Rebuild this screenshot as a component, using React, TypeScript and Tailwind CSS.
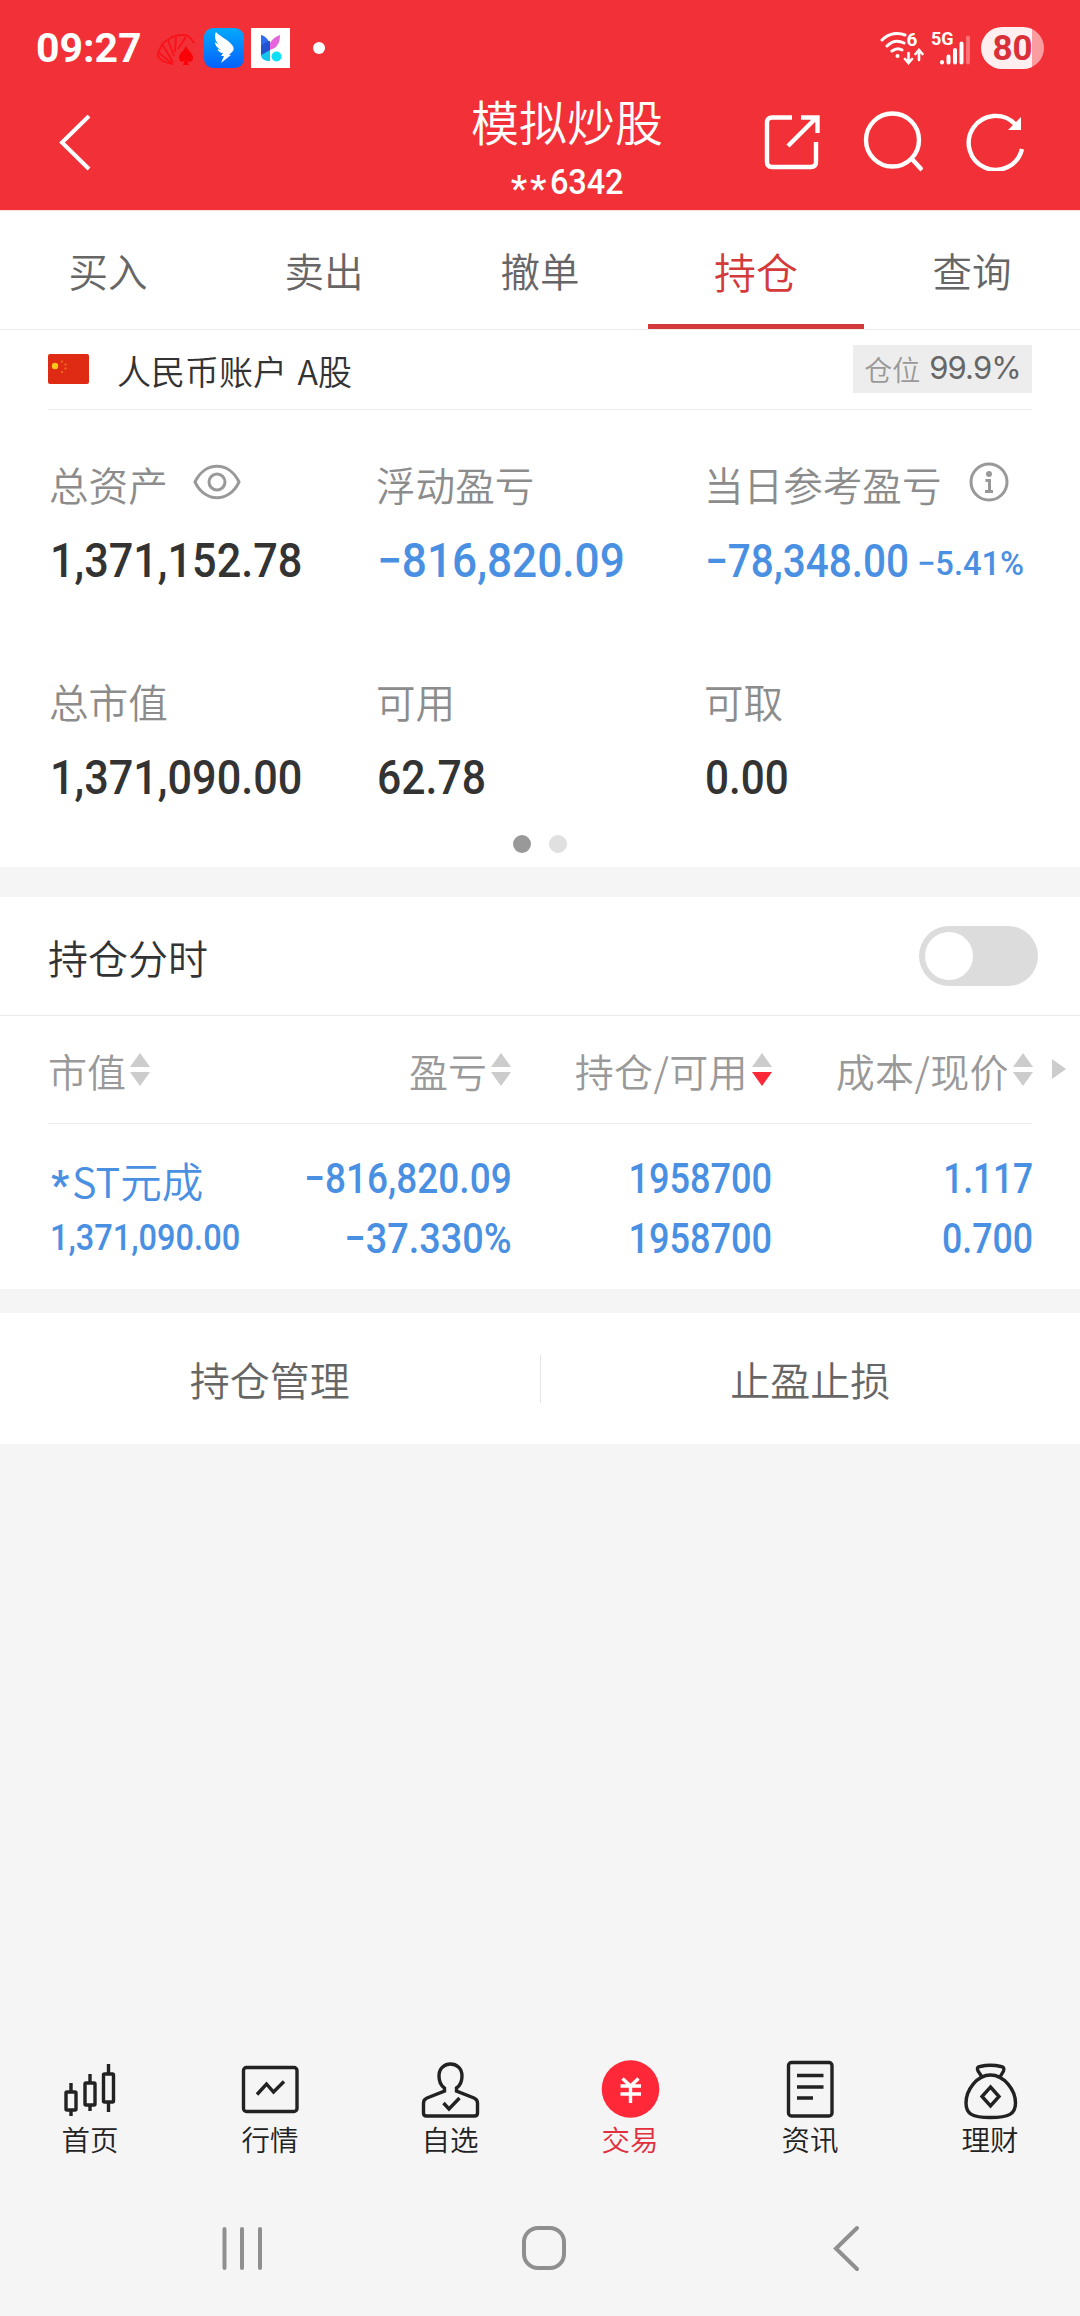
import type { ReactNode } from "react";
import clsx from "clsx";

const TABS = ["买入", "卖出", "撤单", "持仓", "查询"];
const ACTIVE_TAB = "持仓";

const NUM = "inline-block whitespace-nowrap font-medium font-['Roboto',sans-serif]";

function Triangle({ d, className }: { d: string; className: string }) {
  return (
    <svg viewBox="0 0 20 14" className={clsx("w-5 h-3.5", className)} fill="currentColor">
      <path d={d} />
    </svg>
  );
}

function SortIcon({ desc = false }: { desc?: boolean }) {
  return (
    <span className="flex flex-col gap-[5px] ml-[4px] -mt-[3px]">
      <Triangle d="M10 0L20 14H0z" className="text-[#ccc]" />
      <Triangle d="M0 0H20L10 14z" className={desc ? "text-[#fe2838]" : "text-[#ccc]"} />
    </span>
  );
}

/* ─── Status bar ─── */
function StatusBar() {
  return (
    <div className="h-24 flex items-center pl-[36px] pr-[36px] text-white">
      <span className="w-[121px] text-[41px] leading-none font-bold font-['Roboto',sans-serif]">09:27</span>
      <svg viewBox="0 0 38 32" className="w-[38px] h-8 mt-1" fill="none" stroke="#f8121a" strokeWidth="1.800">
        <path d="M16 30C9 29 3 27 1 22C0 20 2 17 3 15C4 10 8 7 12 5C17 1 26 0 31 2C34 4 36 7 37 9" />
        <path d="M16 30L2 19M16 28L5 10M17 22L11 6M18 18L19 3M21 15L29 3" />
        <path d="M29 12C27 17 22 19 22 24C22 28 26 29 28 26L26 31H32L30 26C32 29 36 28 36 24C36 19 31 17 29 12Z" fill="#fb0208" stroke="none" />
      </svg>
      <svg viewBox="0 0 40 40" className="w-10 h-10 ml-[9px]">
        <defs>
          <linearGradient id="wing" x1="0" y1="0" x2="0" y2="1">
            <stop offset="0" stopColor="#03a9fd" />
            <stop offset="1" stopColor="#0561fb" />
          </linearGradient>
        </defs>
        <rect width="40" height="40" rx="9" fill="url(#wing)" />
        <path d="M12 4C15 8 25 12 28 17C30 19 30 21 29 23L25 27H27L17 35L20 28H17L19 25C16 25 14 23 13.500 21L17 22C13 20 11 17 11 14L15 17C11 13 10 8 12 4Z" fill="#fff" />
      </svg>
      <svg viewBox="0 0 39 40" className="w-[39px] h-10 ml-[7px]">
        <rect width="39" height="40" fill="#fff" />
        <path d="M10 7C15 8 19 13 19 19V33C14 32 10 29 10 23Z" fill="#2d6ef0" />
        <path d="M10 27L19 22V33C14 33 10 31 10 27Z" fill="#15c5ee" />
        <path d="M19 15C22 10 26 8 29 7C29 15 26 20 19 22Z" fill="#e565dd" />
        <path d="M10 18C13 15 16 13 19 13V22L10 27Z" fill="#2352d0" />
        <circle cx="25.500" cy="28.500" r="5" fill="#0fdff5" />
      </svg>
      <span className="w-3 h-3 rounded-full bg-white ml-[23px]" />

      <svg viewBox="0 0 44 36" className="w-11 h-9 ml-auto" fill="none" stroke="#fff" strokeWidth="3" strokeLinecap="round">
        <path d="M2 10C9 3 18 2 25 5M7 16C12 11 18 10 24 13M12 21C16 18 19 18 22 20" />
        <circle cx="17.500" cy="26" r="2" fill="#fff" stroke="none" />
        <path d="M28.500 23V32M25 29L28.500 33L32 29M39 30V21M35.500 24L39 20L42.500 24" strokeWidth="2.600" />
        <text x="26.500" y="16" fill="#fff" stroke="none" className="text-[19px] font-bold font-['Roboto',sans-serif]">6</text>
      </svg>
      <svg viewBox="0 0 40 36" className="w-10 h-9 ml-[7px]" fill="none" stroke="#fff" strokeWidth="4" strokeLinecap="round">
        <text x="0" y="15" fill="#fff" stroke="none" className="text-[18px] font-bold font-['Roboto',sans-serif]">5G</text>
        <path d="M11 32V32.500M17.500 26.500V32.500M24 20V32.500M30.500 13.500V32.500" />
        <path d="M37 7.500V32.500" stroke="#ff7175" />
      </svg>
      <span className="w-[63px] h-[42px] ml-[10px] rounded-full overflow-hidden bg-[linear-gradient(90deg,#ffeff0_51px,#fa9da1_51px)] flex items-center justify-center">
        <span className="text-[35px] leading-none font-bold text-[#d9303a] font-['Roboto',sans-serif]">80</span>
      </span>
    </div>
  );
}

/* ─── Title bar ─── */
function TitleBar() {
  return (
    <div className="h-[114px] grid grid-cols-3 items-start text-white">
      <svg viewBox="0 0 32 56" className="w-8 h-14 ml-[59px] mt-[19px]" fill="none" stroke="currentColor" strokeWidth="4">
        <path d="M30 1L3 27.500L30 54" />
      </svg>
      <div className="text-center translate-x-[27px] -mt-1">
        <h1 className="text-[48px] leading-[56px]">模拟炒股</h1>
        <p className="flex items-center justify-center h-[68px] pl-0.5 text-[35px] leading-none">
          <span className={clsx(NUM, "font-bold text-[37px] tracking-[3px] pt-3")}>**</span>
          <span className={clsx(NUM, "origin-left scale-x-93 tracking-[-0.2px] -mr-[3px]")}>6342</span>
        </p>
      </div>
      <div className="flex items-center mt-[14px] ml-[44px] gap-[43px]">
        <svg viewBox="0 0 56 58" className="w-14 h-[58px]" fill="none" stroke="currentColor" strokeWidth="4.400">
          <path d="M28 5.500H8Q3 5.500 3 10.500V50Q3 55 8 55H47Q52 55 52 50V30" />
          <path d="M37 5.500H53.500V21M52 6L24 34" />
        </svg>
        <svg viewBox="0 0 60 62" className="w-15 h-[62px]" fill="none" stroke="currentColor" strokeWidth="4.400">
          <circle cx="29.500" cy="30" r="26.500" />
          <path d="M48 48L59 60" />
        </svg>
        <svg viewBox="0 0 58 60" className="w-[58px] h-15" fill="none" stroke="currentColor" strokeWidth="4.400">
          <path d="M56 38A27 27 0 1 1 49 13" />
          <path d="M55 6V19H42z" fill="currentColor" stroke="none" />
        </svg>
      </div>
    </div>
  );
}

interface StatProps {
  label: string;
  icon?: ReactNode;
  children: ReactNode;
}

function Stat({ label, icon, children }: StatProps) {
  return (
    <div>
      <div className="h-[60px] -ml-px -mt-[2px] mb-[2px] flex items-center text-[39.600px] text-[#8c8c8c] whitespace-nowrap">
        {label}
        {icon}
      </div>
      <div className="h-[90px] flex items-center text-[48px] leading-none">{children}</div>
    </div>
  );
}

const EYE = (
  <svg viewBox="0 0 48 36" className="w-12 h-9 ml-[25px] -mt-[4px]" fill="none" stroke="#999" strokeWidth="3">
    <path d="M2 18C12 -3 36 -3 46 18C36 39 12 39 2 18Z" />
    <circle cx="24" cy="18" r="8" />
  </svg>
);

const INFO = (
  <svg viewBox="0 0 40 40" className="w-10 h-10 ml-[28px] -mt-[4px]" fill="none" stroke="#999" strokeWidth="3">
    <circle cx="20" cy="20" r="18" />
    <circle cx="20" cy="12" r="3" fill="#999" stroke="none" />
    <path d="M16.500 18.500H20.500V29M16 29.500H24" />
  </svg>
);

/* ─── Account summary ─── */
function Summary() {
  return (
    <section className="bg-white h-[537px]">
      <div className="mx-12 h-20 pb-0.5 flex items-center border-b border-[#ebebeb]">
        <svg viewBox="0 0 41 30" className="w-[41px] h-[30px]">
          <rect width="41" height="30" rx="2" fill="#df2a14" />
          <circle cx="7" cy="12" r="3.200" fill="#ffc61a" />
          <g fill="#e8641c">
            <circle cx="14" cy="7.500" r="1.200" />
            <circle cx="17.500" cy="10.500" r="1.200" />
            <circle cx="17.500" cy="14.500" r="1.200" />
            <circle cx="14" cy="18" r="1.200" />
          </g>
        </svg>
        <span className="ml-[28px] pt-[3px] text-[34px] text-[#333] [word-spacing:3px]">人民币账户 A股</span>
        <span className="ml-auto h-12 w-[179px] bg-[#ededed] flex items-center justify-center gap-[9px] text-[28px] text-[#999]">
          仓位
          <span className="text-[31px] text-[#666] font-normal font-['Inter',sans-serif] tracking-[-0.9px]">99.9%</span>
        </span>
      </div>

      <div className="pl-[50px] pt-[46px] grid grid-cols-[327px_328px_1fr] gap-y-[67px] text-[#333]">
        <Stat label="总资产" icon={EYE}>
          <span className={clsx(NUM, "origin-left scale-x-90")}>1,371,152.78</span>
        </Stat>
        <Stat label="浮动盈亏">
          <span className={clsx(NUM, "origin-left scale-x-92 text-[#4a90e2]")}>−816,820.09</span>
        </Stat>
        <Stat label="当日参考盈亏" icon={INFO}>
          <span className={clsx(NUM, "w-[212px] origin-left scale-x-88 text-[46px] text-[#4a90e2]")}>−78,348.00</span>
          <span className={clsx(NUM, "origin-left scale-x-96 text-[34px] pt-1 text-[#4a90e2]")}>−5.41%</span>
        </Stat>
        <Stat label="总市值">
          <span className={clsx(NUM, "origin-left scale-x-90")}>1,371,090.00</span>
        </Stat>
        <Stat label="可用">
          <span className={clsx(NUM, "origin-left scale-x-89")}>62.78</span>
        </Stat>
        <Stat label="可取">
          <span className={clsx(NUM, "origin-left scale-x-88")}>0.00</span>
        </Stat>
      </div>

      <div className="flex justify-center gap-[18px] mt-[12px]">
        <span className="w-[18px] h-[18px] rounded-full bg-[#999]" />
        <span className="w-[18px] h-[18px] rounded-full bg-[#e0e0e0]" />
      </div>
    </section>
  );
}

const COLUMNS = [
  { label: "市值" },
  { label: "盈亏" },
  { label: "持仓/可用", desc: true },
  { label: "成本/现价" },
];

const CELLS = [
  { top: "−816,820.09", bottom: "−37.330%", scale: "scale-x-88", scaleBottom: "scale-x-90" },
  { top: "1958700", bottom: "1958700", scale: "scale-x-86", scaleBottom: "scale-x-86" },
  { top: "1.117", bottom: "0.700", scale: "scale-x-84", scaleBottom: "scale-x-85" },
];

/* ─── Positions ─── */
function Positions() {
  return (
    <section className="bg-white mt-[30px]">
      <div className="h-[119px] pl-12 pr-[42px] flex items-center justify-between border-b border-[#ebebeb]">
        <span className="text-[40px] text-[#333] mt-0.5">持仓分时</span>
        <span className="w-[119px] h-[60px] rounded-full bg-[#dcdcdc] p-[6px]">
          <span className="block w-12 h-12 rounded-full bg-white" />
        </span>
      </div>

      <div className="flex h-[108px]">
        <div className="ml-12 w-[984px] flex items-center border-b border-[#ebebeb] text-[39px] text-[#999]">
          <div className="grow grid grid-cols-[203px_260px_261px_261px] -mr-px pt-0.5">
            {COLUMNS.map((c, i) => (
              <div key={c.label} className={clsx("flex items-center whitespace-nowrap", i > 0 && "justify-end")}>
                <span className={clsx(i > 1 && "tracking-[0.4px]")}>{c.label}</span>
                <SortIcon desc={c.desc} />
              </div>
            ))}
          </div>
        </div>
        <svg viewBox="0 0 14 20" className="w-3.5 h-5 ml-5 mt-[43px]" fill="#ccc">
          <path d="M0 0L14 10L0 20z" />
        </svg>
      </div>

      <div className="h-[165px] pl-12 pt-[27px] grid grid-cols-[203px_261px_260px_261px] text-[#4a90e2]">
        <div>
          <p className="h-[60px] -mt-px mb-px pl-[3px] flex items-center text-[41.500px] whitespace-nowrap">
            <span className="w-[21px] text-[40px] leading-none pt-3 font-bold font-['Roboto',sans-serif]">*</span>
            ST元成
          </p>
          <p className="h-[54px] pl-[2px] flex items-center">
            <span className={clsx(NUM, "text-[37px] origin-left scale-x-88")}>1,371,090.00</span>
          </p>
        </div>
        {CELLS.map((c) => (
          <div key={c.top} className="text-[42px]">
            <p className="h-[54px] flex items-center justify-end">
              <span className={clsx(NUM, "origin-right", c.scale)}>{c.top}</span>
            </p>
            <p className="h-[66px] flex items-center justify-end">
              <span className={clsx(NUM, "origin-right", c.scaleBottom)}>{c.bottom}</span>
            </p>
          </div>
        ))}
      </div>
    </section>
  );
}

const STROKE = { fill: "none", stroke: "#222", strokeWidth: 3.4 };

const NAV: { label: string; icon: ReactNode }[] = [
  {
    label: "首页",
    icon: (
      <g {...STROKE}>
        <rect x="6" y="32" width="10" height="18" rx="1" />
        <path d="M11 23V32M11 50V56M30 14V23M30 45V51M48.500 4V14M48.500 42V52" />
        <rect x="25" y="23" width="10" height="22" rx="1" />
        <rect x="43.500" y="14" width="10" height="28" rx="1" />
      </g>
    ),
  },
  {
    label: "行情",
    icon: (
      <g {...STROKE}>
        <rect x="3.500" y="7.500" width="53.500" height="44" rx="3" />
        <path d="M17 34.500L26.500 24L33.500 32L44 21.500" />
      </g>
    ),
  },
  {
    label: "自选",
    icon: (
      <g {...STROKE}>
        <path d="M24.500 28C20 25 19 21 19 16C19 0 42 0 42 16C42 21 41 25 36.500 28V31L54 38Q57.500 39.500 57.500 43V53Q57.500 56 54.500 56H6.500Q3.500 56 3.500 53V43Q3.500 39.500 7 38L24.500 31V27" />
        <path d="M23.500 43L29 49L39.500 38" />
      </g>
    ),
  },
  {
    label: "交易",
    icon: (
      <>
        <circle cx="30.500" cy="29" r="28.800" fill="#fe2838" />
        <path d="M22.500 18.500L30.500 26L38.500 18.500M20.500 26H41M20.500 34H41M30.500 26V43" fill="none" stroke="#fff" strokeWidth="3.400" />
      </>
    ),
  },
  {
    label: "资讯",
    icon: (
      <g {...STROKE}>
        <rect x="8.500" y="2.500" width="43.500" height="53.500" rx="3" />
        <path d="M17 15.500H43.500M17 27H43.500M17 38H33" />
      </g>
    ),
  },
  {
    label: "理财",
    icon: (
      <g {...STROKE}>
        <path d="M22 17L18 11Q16 7 20 6.500Q30.500 4 41 6.500Q45 7 43.500 11L40 17" />
        <path d="M30.500 15C17 15 6 30 6 43C6 54 12 57.500 30.500 57.500C49 57.500 55.500 54 55.500 43C55.500 30 44 15 30.500 15Z" />
        <path d="M30.500 27L39 36.500L30.500 46L22 36.500Z" />
      </g>
    ),
  },
];

export default function App() {
  return (
    <div className="w-[1080px] h-[2316px] flex flex-col overflow-hidden bg-[#f5f5f5] font-[350] font-['Noto_Sans_CJK_SC',sans-serif]">
      <header className="bg-[#f23037]">
        <StatusBar />
        <TitleBar />
      </header>

      <nav className="h-[120px] bg-white grid grid-cols-5 border-b border-t border-b-[#ebebeb] border-t-[#ffdfe1]">
        {TABS.map((t) => (
          <div
            key={t}
            className={clsx(
              "flex items-center justify-center border-b-[5px]",
              t === ACTIVE_TAB
                ? "pt-[5px] text-[42px] text-[#d43a3a] border-[#d43a3a]"
                : "pt-[5px] text-[39.500px] text-[#666] border-transparent"
            )}
          >
            {t}
          </div>
        ))}
      </nav>

      <Summary />
      <Positions />

      <div className="mt-6 h-[131px] bg-white flex items-center text-[40px] text-[#666]">
        <span className="flex-1 text-center">持仓管理</span>
        <span className="w-px h-12 bg-[#e5e5e5]" />
        <span className="flex-1 text-center">止盈止损</span>
      </div>

      {/* Bottom navigation */}
      <nav className="mt-auto h-[121px] grid grid-cols-6">
        {NAV.map((n) => (
          <div key={n.label} className="flex flex-col items-center">
            <svg viewBox="0 0 61 60" className="w-[61px] h-15">{n.icon}</svg>
            <span
              className={clsx(
                "text-[28.500px] leading-[38px]",
                n.label === "交易" ? "text-[#e0303e]" : "text-[#222]"
              )}
            >
              {n.label}
            </span>
          </div>
        ))}
      </nav>

      {/* System keys */}
      <div className="h-[135px] pt-[44px] flex text-[#8f8f8f]">
        <svg viewBox="0 0 42 46" className="w-[42px] h-[46px] ml-[221px]" fill="none" stroke="currentColor" strokeWidth="4" strokeLinecap="round">
          <path d="M3.500 4V43M21 4V43M39 4V43" />
        </svg>
        <svg viewBox="0 0 46 46" className="w-[46px] h-[46px] ml-[258px]" fill="none" stroke="currentColor" strokeWidth="4">
          <rect x="3" y="3" width="40" height="40" rx="14" />
        </svg>
        <svg viewBox="0 0 28 48" className="w-7 h-12 ml-[265px]" fill="none" stroke="currentColor" strokeWidth="4" strokeLinecap="round">
          <path d="M25 3L4 23.500L25 44" />
        </svg>
      </div>
    </div>
  );
}
